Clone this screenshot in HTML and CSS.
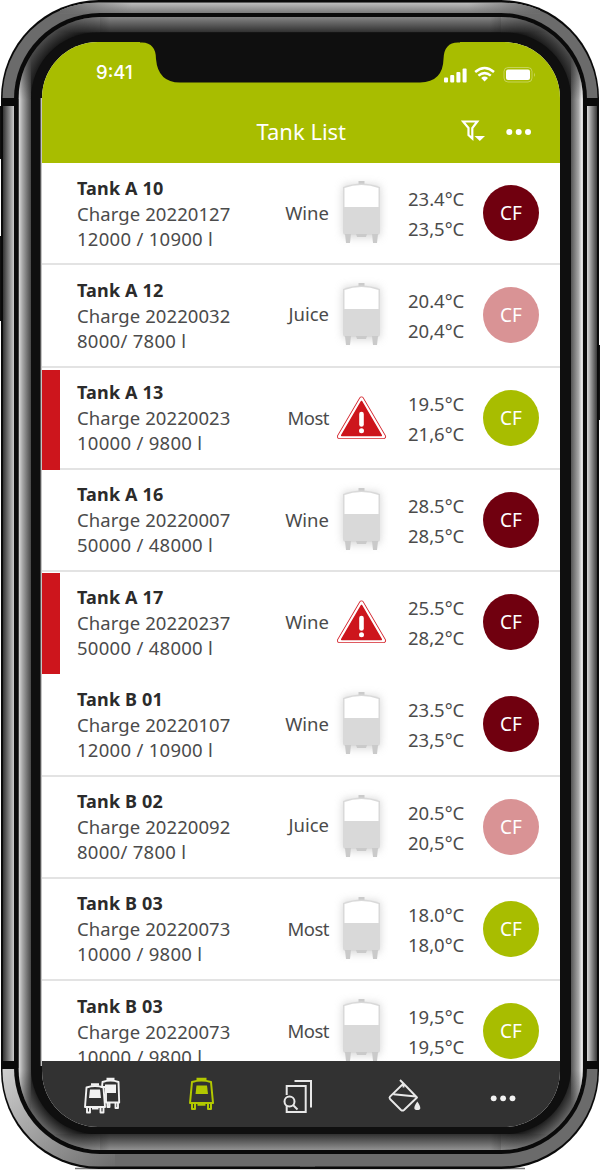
FILE: index.html
```html
<!DOCTYPE html>
<html lang="en">
<head>
<meta charset="utf-8">
<title>Tank List</title>
<link rel="stylesheet" href="styles.css">
</head>
<body>
<svg class="defs" width="0" height="0" aria-hidden="true">
  <defs>
    <symbol id="tank" viewBox="0 0 54 78">
      <rect x="9" y="12" width="37" height="52" rx="4" fill="#b5b5b5" opacity=".6" filter="url(#soft)"/>
      <path d="M24.500 8h6v4h-6z" fill="#cbcbcb"/>
      <path d="M9 14q9-3.500 18.500-3.500T46 14v45q0 3-3 3H12q-3 0-3-3z" fill="#d9d9d9"/>
      <path d="M10.500 15q8-3 17-3t17 3v19h-34z" fill="#fff"/>
      <path d="M11 61h6l-1 9h-4zM38 61h6l-1 9h-4zM22 61h11l-1 3h-9z" fill="#cacaca"/>
    </symbol>
    <symbol id="warn" viewBox="0 0 54 78">
      <path d="M27.500 21L49.500 58.500H5.500z" fill="#d4232b" stroke="#d4232b" stroke-width="5" stroke-linejoin="round"/>
      <path d="M27.500 21L49.500 58.500H5.500z" fill="#fff" stroke="#fff" stroke-width="3.400" stroke-linejoin="round"/>
      <path d="M27.500 23.500L47.300 57.500H7.700z" fill="#cd151c" stroke="#cd151c" stroke-width="1.500" stroke-linejoin="round"/>
      <path d="M27.500 36v10.500" stroke="#fff" stroke-width="4.600" stroke-linecap="round"/>
      <circle cx="27.500" cy="52.700" r="2.500" fill="#fff"/>
    </symbol>
    <filter id="soft" x="-40%" y="-30%" width="180%" height="160%"><feGaussianBlur stdDeviation="4"/></filter>
  </defs>
</svg>
<main class="phone">
  <svg class="frame" viewBox="0 0 600 1170" aria-hidden="true">
    <defs>
      <linearGradient id="gL"><stop offset="0" stop-color="#333"/><stop offset=".6" stop-color="#8a8a8a"/><stop offset="1" stop-color="#ccc"/></linearGradient>
      <linearGradient id="gR"><stop offset="0" stop-color="#d8d8d8"/><stop offset=".5" stop-color="#888"/><stop offset="1" stop-color="#3a3a3a"/></linearGradient>
      <linearGradient id="gT" x2="0" y2="1"><stop offset="0" stop-color="#c0c0c0"/><stop offset="1" stop-color="#777"/></linearGradient>
      <linearGradient id="fade"><stop offset="0" stop-color="#6b6b6b"/><stop offset=".15" stop-color="#6b6b6b" stop-opacity="0"/><stop offset=".85" stop-color="#6b6b6b" stop-opacity="0"/><stop offset="1" stop-color="#6b6b6b"/></linearGradient>
      <linearGradient id="gBL" x2="1" y2="1"><stop offset="0" stop-color="#d0d0d0"/><stop offset="1" stop-color="#6b6b6b"/></linearGradient>
      <linearGradient id="iL"><stop offset="0" stop-color="#e0e0e0"/><stop offset=".3" stop-color="#aaa"/><stop offset="1" stop-color="#484848"/></linearGradient>
      <linearGradient id="iR"><stop offset="0" stop-color="#555"/><stop offset=".65" stop-color="#aaa"/><stop offset=".9" stop-color="#eee"/><stop offset="1" stop-color="#ccc"/></linearGradient>
      <linearGradient id="iT" x2="0" y2="1"><stop offset="0" stop-color="#858585"/><stop offset="1" stop-color="#2e2e2e"/></linearGradient>
      <linearGradient id="iB" x2="0" y2="1"><stop offset="0" stop-color="#303030"/><stop offset="1" stop-color="#929292"/></linearGradient>
      <radialGradient id="c1" gradientUnits="userSpaceOnUse" cx="100" cy="99" r="82"><stop offset=".8" stop-color="#101010"/><stop offset="1" stop-color="#4c4c4c"/></radialGradient>
      <radialGradient id="c2" gradientUnits="userSpaceOnUse" cx="501" cy="99" r="82"><stop offset=".8" stop-color="#101010"/><stop offset="1" stop-color="#4c4c4c"/></radialGradient>
      <radialGradient id="c3" gradientUnits="userSpaceOnUse" cx="100" cy="1068" r="82"><stop offset=".8" stop-color="#101010"/><stop offset="1" stop-color="#666"/></radialGradient>
      <radialGradient id="c4" gradientUnits="userSpaceOnUse" cx="501" cy="1068" r="82"><stop offset=".8" stop-color="#101010"/><stop offset="1" stop-color="#666"/></radialGradient>
      <linearGradient id="mv" x2="0" y2="1"><stop offset="0" stop-color="#000"/><stop offset=".055" stop-color="#fff"/><stop offset=".945" stop-color="#fff"/><stop offset="1" stop-color="#000"/></linearGradient>
      <linearGradient id="mh"><stop offset="0" stop-color="#000"/><stop offset=".12" stop-color="#fff"/><stop offset=".88" stop-color="#fff"/><stop offset="1" stop-color="#000"/></linearGradient>
      <mask id="maskV" maskUnits="userSpaceOnUse" x="0" y="40" width="600" height="1090"><rect y="40" width="600" height="1090" fill="url(#mv)"/></mask>
      <mask id="maskH" maskUnits="userSpaceOnUse" x="50" y="0" width="500" height="1170"><rect x="50" width="500" height="1170" fill="url(#mh)"/></mask>
      <clipPath id="inner"><rect x="18.500" y="17" width="564.500" height="1133" rx="82"/></clipPath>
      <clipPath id="outer"><rect x="2.500" y="2.500" width="595" height="1164" rx="96"/></clipPath>
    </defs>
    <path d="M0 106h3v53H0zM0 236h3v85H0zM597 345h3v75h-3z" fill="#111"/>
    <path d="M75 1168.500h450" stroke="#777" stroke-width="1.500"/>
    <rect x="1" y="0" width="598" height="1169" rx="98" fill="#0a0a0a"/>
    <g clip-path="url(#outer)">
      <path d="M0 0h600v98H0zM300 1069h300v101H300z" fill="#6b6b6b"/>
      <rect x="0" y="1069" width="115" height="101" fill="url(#gBL)"/>
      <rect x="115" y="1069" width="200" height="101" fill="#6b6b6b"/>
      <rect x="60" y="2.500" width="480" height="11" fill="url(#gT)"/>
      <rect x="60" y="2.500" width="480" height="11" fill="url(#fade)"/>
      <rect x="3" y="106" width="11" height="955" fill="url(#gL)"/>
      <rect x="587" y="106" width="10" height="955" fill="url(#gR)"/>
    </g>
    <rect x="14" y="13" width="573" height="1141" rx="86" fill="#0a0a0a"/>
    <g clip-path="url(#inner)">
      <rect x="18" y="17" width="82" height="82" fill="url(#c1)"/>
      <rect x="501" y="17" width="82" height="82" fill="url(#c2)"/>
      <rect x="18" y="1068" width="82" height="82" fill="url(#c3)"/>
      <rect x="501" y="1068" width="82" height="82" fill="url(#c4)"/>
      <g mask="url(#maskV)">
        <rect x="18.500" y="40" width="12.500" height="1090" fill="url(#iL)"/>
        <rect x="571" y="40" width="12" height="1090" fill="url(#iR)"/>
      </g>
      <g mask="url(#maskH)">
        <rect x="50" y="17" width="500" height="15.500" fill="url(#iT)"/>
        <rect x="50" y="1134" width="500" height="16" fill="url(#iB)"/>
      </g>
    </g>
    <rect x="31" y="32.500" width="540" height="1101.500" rx="66" fill="#0f0f0f"/>
    <path d="M41.300 98v968" stroke="#c4c4c4" stroke-width="1.400"/>
  </svg>

  <section class="screen">
    <header class="top">
      <div class="status">
        <span class="clock">9:41</span>
        <svg class="signals" viewBox="0 0 94 20" aria-hidden="true">
          <g fill="#fff">
            <rect x="0" y="12.500" width="4" height="5" rx="1"/><rect x="6.200" y="10" width="4" height="7.500" rx="1"/><rect x="12.400" y="7" width="4" height="10.500" rx="1"/><rect x="18.600" y="3.500" width="4" height="14" rx="1"/>
            <path d="M37.200 13q3.400-2.800 6.800 0l-3.400 3.600z"/>
            <rect x="62" y="4.500" width="24" height="10.500" rx="2"/>
          </g>
          <g fill="none" stroke="#fff" stroke-width="2.500">
            <path d="M31.200 7q9.400-8 18.800 0M34.400 10.600q6.200-5 12.400 0"/>
          </g>
          <rect x="60" y="2.500" width="28" height="14.500" rx="4" fill="none" stroke="#fff" stroke-opacity=".35"/>
          <path d="M90 7.500v4.500q1.500-2.200 0-4.500z" fill="#fff" opacity=".5"/>
        </svg>
      </div>
      <div class="title">
        <h1>Tank List</h1>
        <svg class="actions" viewBox="0 0 72 26" aria-hidden="true">
          <path d="M2 3.500h14.300L11.300 10v10.500L7.500 17v-7z" fill="none" stroke="#fff" stroke-width="2.200"/>
          <path d="M13.500 18h10.500l-5.200 5z" fill="#fff"/>
          <g fill="#fff"><circle cx="48.300" cy="14" r="3"/><circle cx="57.700" cy="14" r="3"/><circle cx="67" cy="14" r="3"/></g>
        </svg>
      </div>
    </header>

    <div class="list">
      <article class="row">
        <div class="info"><b>Tank A 10</b><span>Charge 20220127</span><span class="vol">12000 / 10900 l</span></div>
        <span class="kind">Wine</span><svg class="pic"><use href="#tank"/></svg>
        <div class="temp"><span>23.4°C</span><span>23,5°C</span></div><span class="badge wine">CF</span>
      </article>
      <article class="row">
        <div class="info"><b>Tank A 12</b><span>Charge 20220032</span><span class="vol">8000/ 7800 l</span></div>
        <span class="kind high">Juice</span><svg class="pic"><use href="#tank"/></svg>
        <div class="temp"><span>20.4°C</span><span>20,4°C</span></div><span class="badge juice">CF</span>
      </article>
      <article class="row alert">
        <div class="info"><b>Tank A 13</b><span>Charge 20220023</span><span class="vol">10000 / 9800 l</span></div>
        <span class="kind tight">Most</span><svg class="pic"><use href="#warn"/></svg>
        <div class="temp"><span>19.5°C</span><span>21,6°C</span></div><span class="badge most">CF</span>
      </article>
      <article class="row">
        <div class="info"><b>Tank A 16</b><span>Charge 20220007</span><span class="vol">50000 / 48000 l</span></div>
        <span class="kind">Wine</span><svg class="pic"><use href="#tank"/></svg>
        <div class="temp"><span>28.5°C</span><span>28,5°C</span></div><span class="badge wine">CF</span>
      </article>
      <article class="row alert plain">
        <div class="info"><b>Tank A 17</b><span>Charge 20220237</span><span class="vol">50000 / 48000 l</span></div>
        <span class="kind">Wine</span><svg class="pic"><use href="#warn"/></svg>
        <div class="temp"><span>25.5°C</span><span>28,2°C</span></div><span class="badge wine">CF</span>
      </article>
      <article class="row">
        <div class="info"><b>Tank B 01</b><span>Charge 20220107</span><span class="vol">12000 / 10900 l</span></div>
        <span class="kind">Wine</span><svg class="pic"><use href="#tank"/></svg>
        <div class="temp"><span>23.5°C</span><span>23,5°C</span></div><span class="badge wine">CF</span>
      </article>
      <article class="row">
        <div class="info"><b>Tank B 02</b><span>Charge 20220092</span><span class="vol">8000/ 7800 l</span></div>
        <span class="kind high">Juice</span><svg class="pic"><use href="#tank"/></svg>
        <div class="temp"><span>20.5°C</span><span>20,5°C</span></div><span class="badge juice">CF</span>
      </article>
      <article class="row">
        <div class="info"><b>Tank B 03</b><span>Charge 20220073</span><span class="vol">10000 / 9800 l</span></div>
        <span class="kind tight">Most</span><svg class="pic"><use href="#tank"/></svg>
        <div class="temp"><span>18.0°C</span><span>18,0°C</span></div><span class="badge most">CF</span>
      </article>
      <article class="row">
        <div class="info"><b>Tank B 03</b><span>Charge 20220073</span><span class="vol">10000 / 9800 l</span></div>
        <span class="kind tight">Most</span><svg class="pic"><use href="#tank"/></svg>
        <div class="temp"><span>19,5°C</span><span>19,5°C</span></div><span class="badge most">CF</span>
      </article>
    </div>

    <nav class="tabs">
      <svg viewBox="0 0 40 40" fill="none" stroke="#f2f2f2" stroke-width="1.900" stroke-linejoin="round">
        <path d="M20.500 7q8-3 16 0l.7 20.500H24V12h-4z"/><path d="M24.500 4h8" stroke-width="2.600"/><path d="M23 9.500h11v8.500H23z" fill="#f2f2f2" stroke="none"/><path d="M27.500 28v4h-2v-4M36 28v5h-2.500v-5"/>
        <path d="M4.500 12.500q8.500-3 17 0L23 32H3z" fill="#323232"/><path d="M9 9.500h8" stroke-width="2.600"/><path d="M8 14.500h10l1 8.500H7z" fill="#f2f2f2" stroke="none"/><path d="M5 32v5.500h3V32M18.500 32v5.500h3V32M10 33.500h6.500"/>
      </svg>
      <svg viewBox="0 0 40 40" fill="none" stroke="#b2c800" stroke-width="2" stroke-linejoin="round">
        <path d="M10 7q9.500-3 19 0L31 28H8z"/><path d="M14.500 4.200h10" stroke-width="2.800"/><path d="M14.500 10.500h10.500l1 8.500H13.500z" fill="#b2c800" stroke="none"/><path d="M10 28v6h3v-6M26 28v6h3v-6M15.500 29.800h8"/>
      </svg>
      <svg viewBox="0 0 40 40" fill="none" stroke="#e8e8e8" stroke-width="2">
        <path d="M9.700 20V11h19v26h-19v-6M17.500 6H34v26.500"/><circle cx="12.500" cy="26.500" r="5" fill="#323232"/><path d="M16 30l4.500 4.500"/>
      </svg>
      <svg viewBox="0 0 40 40" fill="none" stroke="#e8e8e8" stroke-width="1.900" stroke-linejoin="round">
        <path d="M17 5l3.500 3.500v4M20.500 8.500l13.500 14-13 12.500q-1.500 1.200-3 0L7 24q-1-1.200 0-2.400zM10.500 19.300l22.500 2.200"/><path d="M34.300 26.500q6 8.500 0 8.500t0-8.500z" fill="#e8e8e8" stroke="none"/>
      </svg>
      <svg viewBox="0 0 40 40" fill="#f2f2f2"><circle cx="10.700" cy="23.300" r="2.900"/><circle cx="20.100" cy="23.300" r="2.900"/><circle cx="29.500" cy="23.300" r="2.900"/></svg>
    </nav>
  </section>
  <svg class="notch" viewBox="0 0 320 42" aria-hidden="true"><path d="M0 0V1.500H2Q16 2 16 18Q18 41.500 40 41.500H280Q303 41 303.500 18Q304 1.500 318 1.500H320V0z" fill="#0f0f0f"/></svg>
</main>
</body>
</html>
```
FILE: styles.css
```css
* { box-sizing: border-box; }

body {
  margin: 0;
  background: #fff;
  font-family: "Noto Sans", "Open Sans", sans-serif;
  color: #4b4b4b;
}

.defs { position: absolute; }

.phone {
  position: relative;
  width: 600px;
  height: 1170px;
  padding: 42px 40px 43px 42px;
  overflow: hidden;
}

.frame {
  position: absolute;
  inset: 0;
  width: 600px;
  height: 1170px;
}

.screen {
  position: relative;
  display: flex;
  flex-direction: column;
  height: 1085px;
  border-radius: 56px;
  overflow: hidden;
  background: #fff;
}

.notch {
  position: absolute;
  left: 140px;
  top: 41px;
  width: 320px;
  height: 42px;
}

.top {
  flex: none;
  height: 121px;
  background: #a8bd00;
  color: #fff;
}

.status {
  display: flex;
  justify-content: space-between;
  align-items: center;
  height: 60px;
  padding: 0 22px 0 54px;
}

.clock {
  font-family: Inter, sans-serif;
  font-size: 18.5px;
  font-weight: 500;
}

.signals {
  width: 94px;
  height: 20px;
  margin-top: 6px;
}

.title {
  display: flex;
  align-items: center;
  justify-content: space-between;
  height: 58px;
  padding: 0 27px 0 214.5px;
}

h1 {
  margin: 0;
  font-size: 22px;
  font-weight: 400;
}

.actions {
  width: 72px;
  height: 26px;
}

.list {
  flex: none;
  height: 898px;
  overflow: hidden;
}

.row {
  display: grid;
  grid-template-columns: 171px 81px 5px 54px 20px 57px 18px 56px;
  align-items: center;
  height: 102.25px;
  padding: 0 0 2px 35px;
  background: linear-gradient(#e3e3e3, #e3e3e3) 0 100% / 100% 2px no-repeat;
  font-size: 18.5px;
}

.alert {
  background:
    linear-gradient(#cd151c, #cd151c) 0 100% / 18px 100px no-repeat,
    linear-gradient(#e3e3e3, #e3e3e3) 0 100% / 100% 2px no-repeat;
}

.alert.plain {
  background: linear-gradient(#cd151c, #cd151c) 0 100% / 18px 101px no-repeat;
}

.info {
  grid-column: 1;
  display: flex;
  flex-direction: column;
  line-height: 25px;
  white-space: nowrap;
}

.info b {
  color: #2b2b2b;
  font-size: 18px;
  font-weight: 700;
  letter-spacing: 0.15px;
}

.info span { letter-spacing: 0.08px; }

.info .vol { letter-spacing: 0.28px; }

.kind {
  grid-column: 2;
  text-align: right;
  margin-top: -1px;
}

.kind.high { margin-top: -4px; }

.kind.tight { letter-spacing: -0.5px; }

.pic {
  grid-column: 4;
  width: 54px;
  height: 78px;
  margin-top: -2px;
}

.temp {
  grid-column: 6;
  display: flex;
  flex-direction: column;
  line-height: 30px;
  white-space: nowrap;
  margin-top: 2px;
}

.badge {
  grid-column: 8;
  display: grid;
  place-items: center;
  width: 56px;
  height: 56px;
  border-radius: 50%;
  color: #fff;
  font-size: 19px;
}

.wine { background: #70000f; }
.juice { background: #d99395; }
.most { background: #a8bd00; }

.tabs {
  flex: 1;
  display: grid;
  grid-template-columns: 40px 40px 40px 40px 40px;
  column-gap: 0;
  justify-content: space-between;
  padding: 14px 37px 0 40px;
  background: #323232;
}

.tabs svg {
  width: 40px;
  height: 40px;
}

.tabs svg:nth-child(3) { margin-left: -6px; }
```
